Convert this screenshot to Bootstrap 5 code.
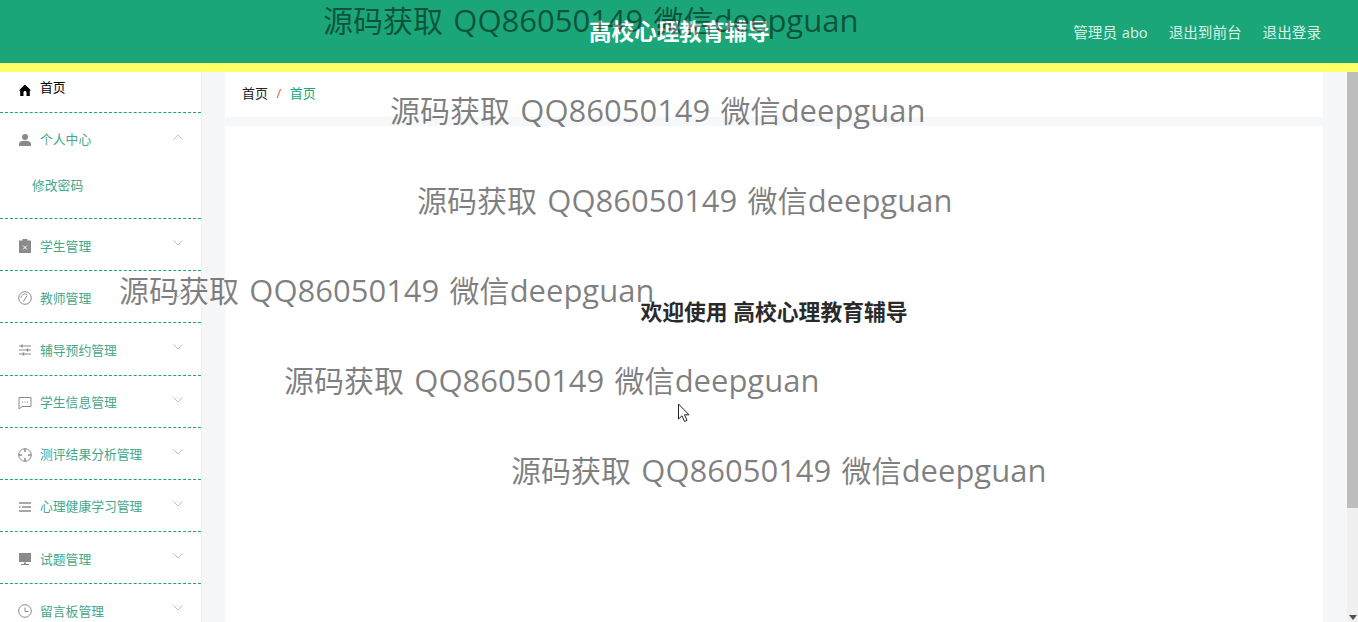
<!DOCTYPE html>
<html lang="zh">
<head>
    <meta charset="UTF-8">
    <meta name="viewport" content="width=device-width, initial-scale=1.0">
    <title>高校心理教育辅导</title>
    <link href="https://cdn.jsdelivr.net/npm/bootstrap@5.3.3/dist/css/bootstrap.min.css" rel="stylesheet">
    <style>
        html, body { height: 100%; overflow: hidden; }
        body { font-family: "Open Sans", "Noto Sans CJK SC", sans-serif; background: #f5f7f9; }
        .top-bar { height: 72px; background: #1aa678; border-bottom: 9px solid #ffff66; position: relative; color: #fff; }
        .top-title { position: absolute; left: 589px; top: 17px; font-size: 22.6px; line-height: 30px; font-weight: 700; white-space: nowrap; }
        .top-links { font-size: 14.6px; line-height: 20px; padding-top: 22px; padding-right: 37px; gap: 21px; word-spacing: 1px; color: #d9f2e8; }
        .page-area { height: 550px; }
        .side-menu { width: 202px; flex: none; background: #fff; border-right: 1px solid #eef0f3; overflow: hidden; font-size: 12.8px; }
        .menu-row { height: 52.2px; padding: 3px 18px 0; border-bottom: 1px dashed #1aa678; color: #45a68a; gap: 8px; }
        .menu-row svg.ico { width: 14px; height: 14px; flex: none; color: #8a8a8a; }
        .menu-row svg.chev { width: 10px; height: 6px; margin-left: auto; margin-top: -6px; color: #c0c0c0; flex: none; }
        .menu-home { height: 41px; color: #000; padding-top: 0; padding-bottom: 9px; }
        .menu-row.menu-home svg.ico { color: #000; margin-top: 4px; }
        .menu-open { height: 52px; border-bottom: 0; padding-top: 2px; }
        .menu-sub { height: 54px; padding: 11px 0 0 32px; border-bottom: 1px dashed #1aa678; color: #45a68a; }
        .main-area { padding: 0 24px 0 23px; min-width: 0; }
        .crumb-box { height: 45px; background: #fff; padding: 0 17px 1px; font-size: 13px; margin-bottom: 9px; }
        .crumb-box .breadcrumb { --bs-breadcrumb-margin-bottom: 0; --bs-breadcrumb-divider-color: #e2572c; --bs-breadcrumb-item-active-color: #1aa678; --bs-breadcrumb-item-padding-x: 8.5px; }
        .crumb-box .breadcrumb-item:first-child { color: #222; }
        .main-box { background: #fff; border: 0; border-radius: 0; padding-top: 170px; }
        .welcome { font-size: 21.8px; line-height: 32px; font-weight: 700; color: #2a2a2a; text-align: center; }
        .fake-scroll { width: 11px; flex: none; background: #f0f0f0; position: relative; }
        .fake-thumb { height: 436px; background: #bdbdbd; }
        .fake-arrow { position: absolute; left: 2px; bottom: 2px; width: 0; height: 0; border: 4px solid transparent; border-top: 5px solid #505050; border-bottom: 0; }
        .wm { position: absolute; z-index: 10; font-size: 30px; line-height: 40px; word-spacing: 2.500px; color: rgba(0, 0, 0, .5); white-space: nowrap; pointer-events: none; }
        .wm-latin { font-size: 31px; }
        .wm-1 { left: 323px; top: 0; }
        .wm-2 { left: 390px; top: 90px; }
        .wm-3 { left: 417px; top: 180px; }
        .wm-4 { left: 119px; top: 270px; }
        .wm-5 { left: 284px; top: 360px; }
        .wm-6 { left: 511px; top: 450px; }
        .mouse-arrow { position: absolute; z-index: 11; left: 677px; top: 403px; width: 14px; height: 20px; }
    </style>
</head>
<body>
    <header class="top-bar d-flex justify-content-end">
        <div class="top-title">高校心理教育辅导</div>
        <div class="top-links d-flex">
            <span>管理员 abo</span>
            <span>退出到前台</span>
            <span>退出登录</span>
        </div>
    </header>

    <div class="page-area d-flex">
        <aside class="side-menu">
            <div class="menu-row menu-home d-flex align-items-center">
                <svg class="ico" viewBox="0 0 14 14" fill="currentColor"><path d="M7 1.500 0.800 7.600 2.200 7.600V13H5.500V9.200a1.500 1.500 0 0 1 3 0V13H11.800V7.600H13.200Z"/></svg>
                <span>首页</span>
            </div>
            <div class="menu-row menu-open d-flex align-items-center">
                <svg class="ico" viewBox="0 0 14 14" fill="currentColor"><circle cx="7" cy="4" r="3"/><path d="M1 13V11C1 8.800 3 7.800 7 7.800S13 8.800 13 11V13Z"/></svg>
                <span>个人中心</span>
                <svg class="chev" viewBox="0 0 10 6" fill="none" stroke="currentColor"><path d="M.5 5.500 5 1 9.500 5.500"/></svg>
            </div>
            <div class="menu-sub">修改密码</div>
            <div class="menu-row d-flex align-items-center">
                <svg class="ico" viewBox="0 0 14 14" fill="currentColor"><path d="M4.500 0H9.500V1.500H13V14H1V1.500H4.500Z"/><path d="M5 6.500 9 10.500M9 6.500 5 10.500" stroke="#fff"/></svg>
                <span>学生管理</span>
                <svg class="chev" viewBox="0 0 10 6" fill="none" stroke="currentColor"><path d="M.5.500 5 5 9.500.500"/></svg>
            </div>
            <div class="menu-row d-flex align-items-center">
                <svg class="ico" viewBox="0 0 14 14" fill="none" stroke="currentColor"><circle cx="7" cy="7" r="6.300"/><path d="M3 7A4 4 0 0 1 9 3.500" stroke-width=".8"/><path d="M5.500 10.500 9 4.500"/></svg>
                <span>教师管理</span>
                <svg class="chev" viewBox="0 0 10 6" fill="none" stroke="currentColor"><path d="M.5.500 5 5 9.500.500"/></svg>
            </div>
            <div class="menu-row d-flex align-items-center">
                <svg class="ico" viewBox="0 0 14 14" fill="none" stroke="currentColor"><path d="M1 3H13M1 7H13M1 11H13"/><path d="M4 1.500V4.500M9.500 5.500V8.500M5.500 9.500V12.500" stroke-width="1.500"/></svg>
                <span>辅导预约管理</span>
                <svg class="chev" viewBox="0 0 10 6" fill="none" stroke="currentColor"><path d="M.5.500 5 5 9.500.500"/></svg>
            </div>
            <div class="menu-row d-flex align-items-center">
                <svg class="ico" viewBox="0 0 14 14" fill="none" stroke="currentColor"><path d="M1 1.500H13V10.500H4L1 13Z"/><path d="M4 6H5M6.500 6H7.500M9 6H10"/></svg>
                <span>学生信息管理</span>
                <svg class="chev" viewBox="0 0 10 6" fill="none" stroke="currentColor"><path d="M.5.500 5 5 9.500.500"/></svg>
            </div>
            <div class="menu-row d-flex align-items-center">
                <svg class="ico" viewBox="0 0 14 14" fill="none" stroke="currentColor"><circle cx="7" cy="7" r="6.300"/><path d="M7 .700V4M7 10V13.300M.700 7H4M10 7H13.300" stroke-width="1.500"/></svg>
                <span>测评结果分析管理</span>
                <svg class="chev" viewBox="0 0 10 6" fill="none" stroke="currentColor"><path d="M.5.500 5 5 9.500.500"/></svg>
            </div>
            <div class="menu-row d-flex align-items-center">
                <svg class="ico" viewBox="0 0 14 14" fill="none" stroke="currentColor" stroke-width="1.500"><path d="M1 3H13M4 7H13M1 11H13M1 7H2.500"/></svg>
                <span>心理健康学习管理</span>
                <svg class="chev" viewBox="0 0 10 6" fill="none" stroke="currentColor"><path d="M.5.500 5 5 9.500.500"/></svg>
            </div>
            <div class="menu-row d-flex align-items-center">
                <svg class="ico" viewBox="0 0 14 14" fill="currentColor"><path d="M1 1H13V10H1ZM6 10.500H8V12H11V13H3V12H6Z"/></svg>
                <span>试题管理</span>
                <svg class="chev" viewBox="0 0 10 6" fill="none" stroke="currentColor"><path d="M.5.500 5 5 9.500.500"/></svg>
            </div>
            <div class="menu-row d-flex align-items-center">
                <svg class="ico" viewBox="0 0 14 14" fill="none" stroke="currentColor"><circle cx="7" cy="7" r="6.300"/><path d="M7 3.500V7.500H10.500"/></svg>
                <span>留言板管理</span>
                <svg class="chev" viewBox="0 0 10 6" fill="none" stroke="currentColor"><path d="M.5.500 5 5 9.500.500"/></svg>
            </div>
        </aside>

        <main class="main-area flex-grow-1 d-flex flex-column">
            <div class="crumb-box d-flex align-items-center">
                <ol class="breadcrumb">
                    <li class="breadcrumb-item">首页</li>
                    <li class="breadcrumb-item active">首页</li>
                </ol>
            </div>
            <div class="main-box card flex-grow-1">
                <div class="welcome">欢迎使用 高校心理教育辅导</div>
            </div>
        </main>

        <div class="fake-scroll">
            <div class="fake-thumb"></div>
            <div class="fake-arrow"></div>
        </div>
    </div>

    <div class="wm wm-1">源码获取 <span class="wm-latin">QQ86050149</span> 微信<span class="wm-latin">deepguan</span></div>
    <div class="wm wm-2">源码获取 <span class="wm-latin">QQ86050149</span> 微信<span class="wm-latin">deepguan</span></div>
    <div class="wm wm-3">源码获取 <span class="wm-latin">QQ86050149</span> 微信<span class="wm-latin">deepguan</span></div>
    <div class="wm wm-4">源码获取 <span class="wm-latin">QQ86050149</span> 微信<span class="wm-latin">deepguan</span></div>
    <div class="wm wm-5">源码获取 <span class="wm-latin">QQ86050149</span> 微信<span class="wm-latin">deepguan</span></div>
    <div class="wm wm-6">源码获取 <span class="wm-latin">QQ86050149</span> 微信<span class="wm-latin">deepguan</span></div>

    <svg class="mouse-arrow" viewBox="0 0 14 20"><path d="M1.500 1V16L5 12.800 7.500 18.500 10 17.400 7.500 11.800H12Z" fill="#fff" stroke="#222"/></svg>

    <script src="https://cdn.jsdelivr.net/npm/bootstrap@5.3.3/dist/js/bootstrap.bundle.min.js"></script>
</body>
</html>
